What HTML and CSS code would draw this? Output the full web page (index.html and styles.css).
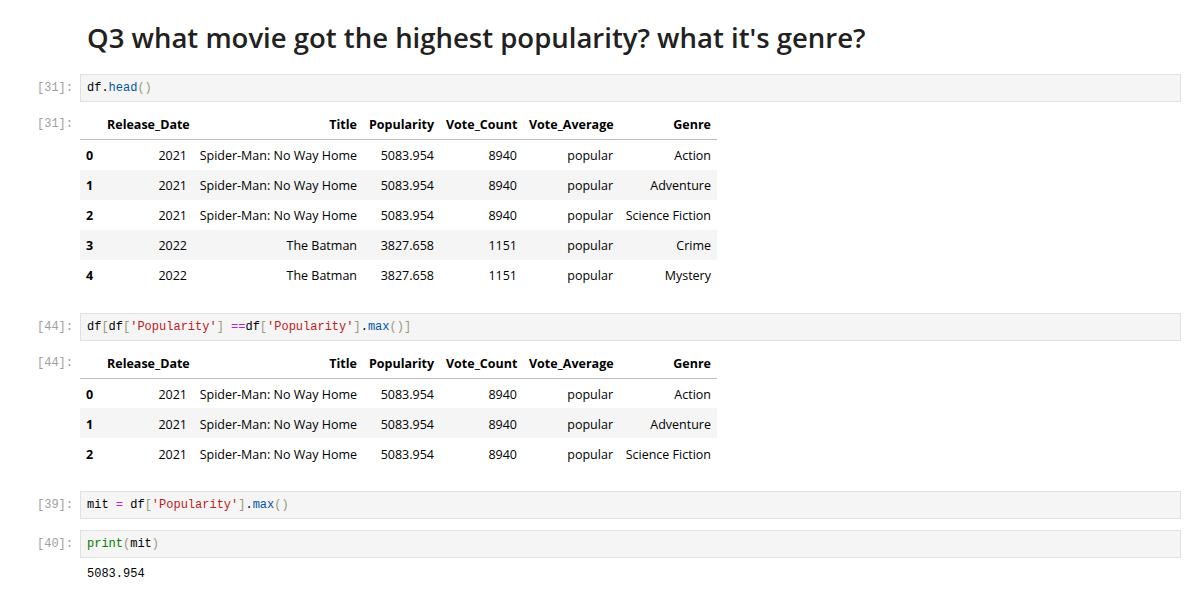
FILE: index.html
```html
<!DOCTYPE html>
<html>
<head>
<meta charset="utf-8">
<link rel="stylesheet" href="styles.css">
</head>
<body>
<div class="notebook">
  <div class="cell md">
    <div class="prompt"></div>
    <h2 class="heading">Q3 what movie got the highest popularity? what it's genre?</h2>
  </div>

  <div class="cell">
    <div class="row">
      <div class="prompt">[31]:</div>
      <div class="input"><span class="v">df</span><span class="op">.</span><span class="p">head</span><span class="b">()</span></div>
    </div>
    <div class="row out">
      <div class="prompt">[31]:</div>
      <div class="output">
        <table class="df">
          <colgroup><col class="c0"><col class="c1"><col class="c2"><col class="c3"><col class="c4"><col class="c5"><col class="c6"></colgroup>
          <thead><tr><th></th><th>Release_Date</th><th>Title</th><th>Popularity</th><th>Vote_Count</th><th>Vote_Average</th><th>Genre</th></tr></thead>
          <tbody>
            <tr><th>0</th><td>2021</td><td>Spider-Man: No Way Home</td><td>5083.954</td><td>8940</td><td>popular</td><td>Action</td></tr>
            <tr><th>1</th><td>2021</td><td>Spider-Man: No Way Home</td><td>5083.954</td><td>8940</td><td>popular</td><td>Adventure</td></tr>
            <tr><th>2</th><td>2021</td><td>Spider-Man: No Way Home</td><td>5083.954</td><td>8940</td><td>popular</td><td>Science Fiction</td></tr>
            <tr><th>3</th><td>2022</td><td>The Batman</td><td>3827.658</td><td>1151</td><td>popular</td><td>Crime</td></tr>
            <tr><th>4</th><td>2022</td><td>The Batman</td><td>3827.658</td><td>1151</td><td>popular</td><td>Mystery</td></tr>
          </tbody>
        </table>
      </div>
    </div>
  </div>

  <div class="cell">
    <div class="row">
      <div class="prompt">[44]:</div>
      <div class="input"><span class="v">df</span><span class="b">[</span><span class="v">df</span><span class="b">[</span><span class="s">'Popularity'</span><span class="b">]</span> <span class="o">==</span><span class="v">df</span><span class="b">[</span><span class="s">'Popularity'</span><span class="b">]</span><span class="op">.</span><span class="p">max</span><span class="b">()]</span></div>
    </div>
    <div class="row out">
      <div class="prompt">[44]:</div>
      <div class="output">
        <table class="df">
          <colgroup><col class="c0"><col class="c1"><col class="c2"><col class="c3"><col class="c4"><col class="c5"><col class="c6"></colgroup>
          <thead><tr><th></th><th>Release_Date</th><th>Title</th><th>Popularity</th><th>Vote_Count</th><th>Vote_Average</th><th>Genre</th></tr></thead>
          <tbody>
            <tr><th>0</th><td>2021</td><td>Spider-Man: No Way Home</td><td>5083.954</td><td>8940</td><td>popular</td><td>Action</td></tr>
            <tr><th>1</th><td>2021</td><td>Spider-Man: No Way Home</td><td>5083.954</td><td>8940</td><td>popular</td><td>Adventure</td></tr>
            <tr><th>2</th><td>2021</td><td>Spider-Man: No Way Home</td><td>5083.954</td><td>8940</td><td>popular</td><td>Science Fiction</td></tr>
          </tbody>
        </table>
      </div>
    </div>
  </div>

  <div class="cell">
    <div class="row">
      <div class="prompt">[39]:</div>
      <div class="input"><span class="v">mit</span> <span class="o">=</span> <span class="v">df</span><span class="b">[</span><span class="s">'Popularity'</span><span class="b">]</span><span class="op">.</span><span class="p">max</span><span class="b">()</span></div>
    </div>
  </div>

  <div class="cell">
    <div class="row">
      <div class="prompt">[40]:</div>
      <div class="input"><span class="g">print</span><span class="b">(</span><span class="v">mit</span><span class="b">)</span></div>
    </div>
    <div class="row">
      <div class="prompt"></div>
      <div class="stream">5083.954</div>
    </div>
  </div>
</div>
</body>
</html>
```

FILE: styles.css
```css
html, body {
  margin: 0;
  padding: 0;
  background: #ffffff;
}
body {
  font-family: "Open Sans", "Noto Sans", sans-serif;
  color: #212121;
}
.notebook {
  padding: 16px 5px 0 0;
}
.cell {
  display: flex;
  flex-direction: column;
  margin-bottom: 11px;
}
.cell.md {
  flex-direction: row;
  margin-bottom: 14px;
}
.row {
  display: flex;
  align-items: flex-start;
}
.prompt {
  width: 74px;
  flex: none;
  box-sizing: border-box;
  padding-right: 1px;
  text-align: right;
  font-family: "Liberation Mono", "DejaVu Sans Mono", monospace;
  font-size: 12px;
  color: #9e9e9e;
  line-height: 28px;
}
.heading {
  margin: 0 0 0 13px;
  font-size: 27.5px;
  font-weight: 600;
  line-height: 44px;
  color: #212121;
}
.input {
  flex: 1;
  margin-left: 6px;
  height: 28px;
  box-sizing: border-box;
  border: 1px solid #e0e0e0;
  background: #f5f5f5;
  padding: 0 6px;
  font-family: "Liberation Mono", "DejaVu Sans Mono", monospace;
  font-size: 12px;
  line-height: 26px;
  white-space: pre;
  color: #000;
}
.v { color: #000; }
.op { color: #000; }
.p { color: #0055aa; }
.b { color: #999977; }
.s { color: #ba2121; }
.o { color: #aa22ff; }
.g { color: #008000; }

.out {
  padding-top: 8px;
  padding-bottom: 12px;
}
.out .prompt {
  line-height: 28px;
}
.output {
  margin-left: 6px;
}
.stream {
  margin-left: 6px;
  padding: 5px 7px 4px;
  font-family: "Liberation Mono", "DejaVu Sans Mono", monospace;
  font-size: 12px;
  line-height: 22px;
  color: #000;
}
.df {
  border-collapse: collapse;
  table-layout: fixed;
  width: 637px;
  font-size: 12.5px;
  color: #000;
}
.df .c0 { width: 21px; }
.df .c1 { width: 92px; }
.df .c2 { width: 170px; }
.df .c3 { width: 77px; }
.df .c4 { width: 83px; }
.df .c5 { width: 96px; }
.df .c6 { width: 98px; }
.df th, .df td {
  padding: 0 6px;
  text-align: right;
  white-space: nowrap;
  overflow: visible;
}
.df thead th {
  height: 29px;
  font-weight: 700;
  border-bottom: 1px solid #bdbdbd;
  vertical-align: middle;
}
.df tbody th, .df tbody td {
  padding-top: 2px;
}
.df tbody th {
  text-align: left;
  font-weight: 700;
}
.df tbody tr {
  height: 30px;
}
.df tbody tr:nth-child(even) {
  background: #f5f5f5;
}
```
